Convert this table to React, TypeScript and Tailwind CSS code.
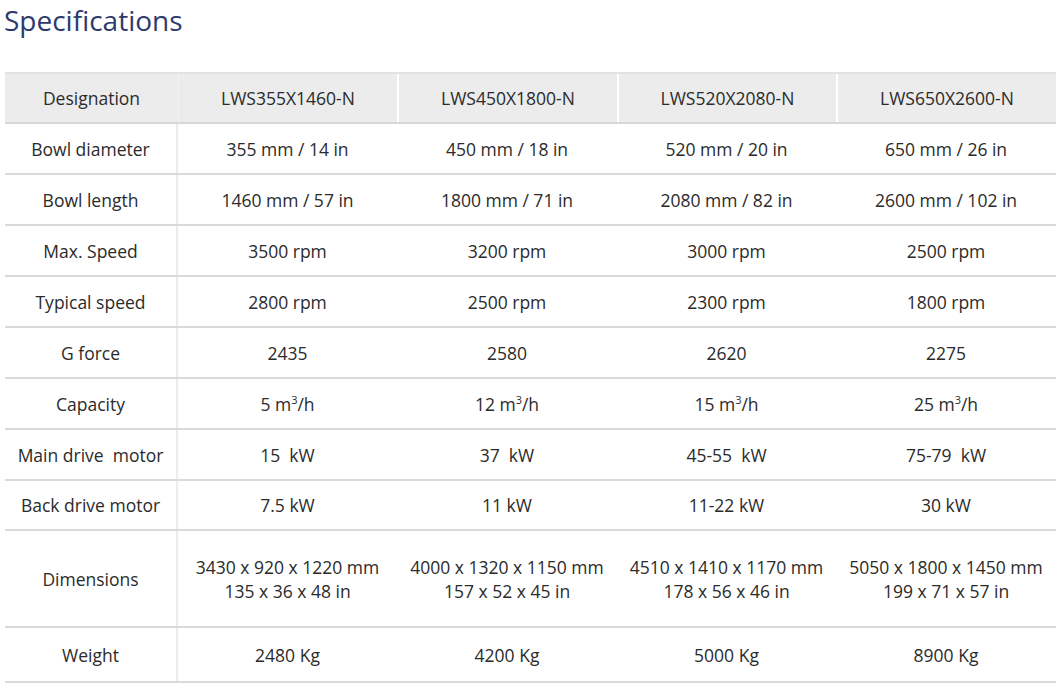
const models = ["LWS355X1460-N", "LWS450X1800-N", "LWS520X2080-N", "LWS650X2600-N"];

type Row = { label: string; values: React.ReactNode[]; h: string };

const Cube = ({ n }: { n: string }) => (
  <span>
    {n} m<sup className="text-[11px] -top-[7px]">3</sup>/h
  </span>
);

const rows: Row[] = [
  { label: "Bowl diameter", values: ["355 mm / 14 in", "450 mm / 18 in", "520 mm / 20 in", "650 mm / 26 in"], h: "h-[51px]" },
  { label: "Bowl length", values: ["1460 mm / 57 in", "1800 mm / 71 in", "2080 mm / 82 in", "2600 mm / 102 in"], h: "h-[51px]" },
  { label: "Max. Speed", values: ["3500 rpm", "3200 rpm", "3000 rpm", "2500 rpm"], h: "h-[51px]" },
  { label: "Typical speed", values: ["2800 rpm", "2500 rpm", "2300 rpm", "1800 rpm"], h: "h-[51px]" },
  { label: "G force", values: ["2435", "2580", "2620", "2275"], h: "h-[51px]" },
  { label: "Capacity", values: [<Cube n="5" />, <Cube n="12" />, <Cube n="15" />, <Cube n="25" />], h: "h-[51px]" },
  { label: "Main drive\u00a0 motor", values: ["15\u00a0 kW", "37\u00a0 kW", "45-55\u00a0 kW", "75-79\u00a0 kW"], h: "h-[51px]" },
  { label: "Back drive motor", values: ["7.5 kW", "11 kW", "11-22 kW", "30 kW"], h: "h-[50px]" },
  {
    label: "Dimensions",
    values: [
      <>3430 x 920 x 1220 mm<br />135 x 36 x 48 in</>,
      <>4000 x 1320 x 1150 mm<br />157 x 52 x 45 in</>,
      <>4510 x 1410 x 1170 mm<br />178 x 56 x 46 in</>,
      <>5050 x 1800 x 1450 mm<br />199 x 71 x 57 in</>,
    ],
    h: "h-[97px]",
  },
  { label: "Weight", values: ["2480 Kg", "4200 Kg", "5000 Kg", "8900 Kg"], h: "h-[55px]" },
];

const cols = "grid grid-cols-[173px_219px_220px_219px_220px]";

export default function App() {
  return (
    <div className="w-[1060px] h-[685px] bg-white overflow-hidden font-['Open_Sans',sans-serif] text-[#2b2b2b]">
      <h1 className="pl-[4px] pt-[1px] text-[28px] leading-[38px] text-[#2e3a6c]">Specifications</h1>
      <div className="ml-[5px] mt-[33px] w-[1051px]">
        <div className={`${cols} h-[52px] bg-[#ececec] border-t-2 border-[#e2e2e2] border-b-2 border-b-[#d8d8d8] text-[17.5px]`}>
          <div className="flex items-center justify-center">Designation</div>
          {models.map((m, i) => (
            <div key={m} className={`flex items-center justify-center ${i > 0 ? "border-l-2 border-white" : "border-l border-[#f2f2f2]"}`}>
              {m}
            </div>
          ))}
        </div>
        {rows.map((r) => (
          <div key={r.label} className={`${cols} ${r.h} border-b-2 border-[#dadada] text-[17.5px] leading-[24px]`}>
            <div className="flex items-center justify-center border-r-2 border-[#ececec]">{r.label}</div>
            {r.values.map((v, i) => (
              <div key={i} className="flex items-center justify-center text-center">
                {v}
              </div>
            ))}
          </div>
        ))}
      </div>
    </div>
  );
}
